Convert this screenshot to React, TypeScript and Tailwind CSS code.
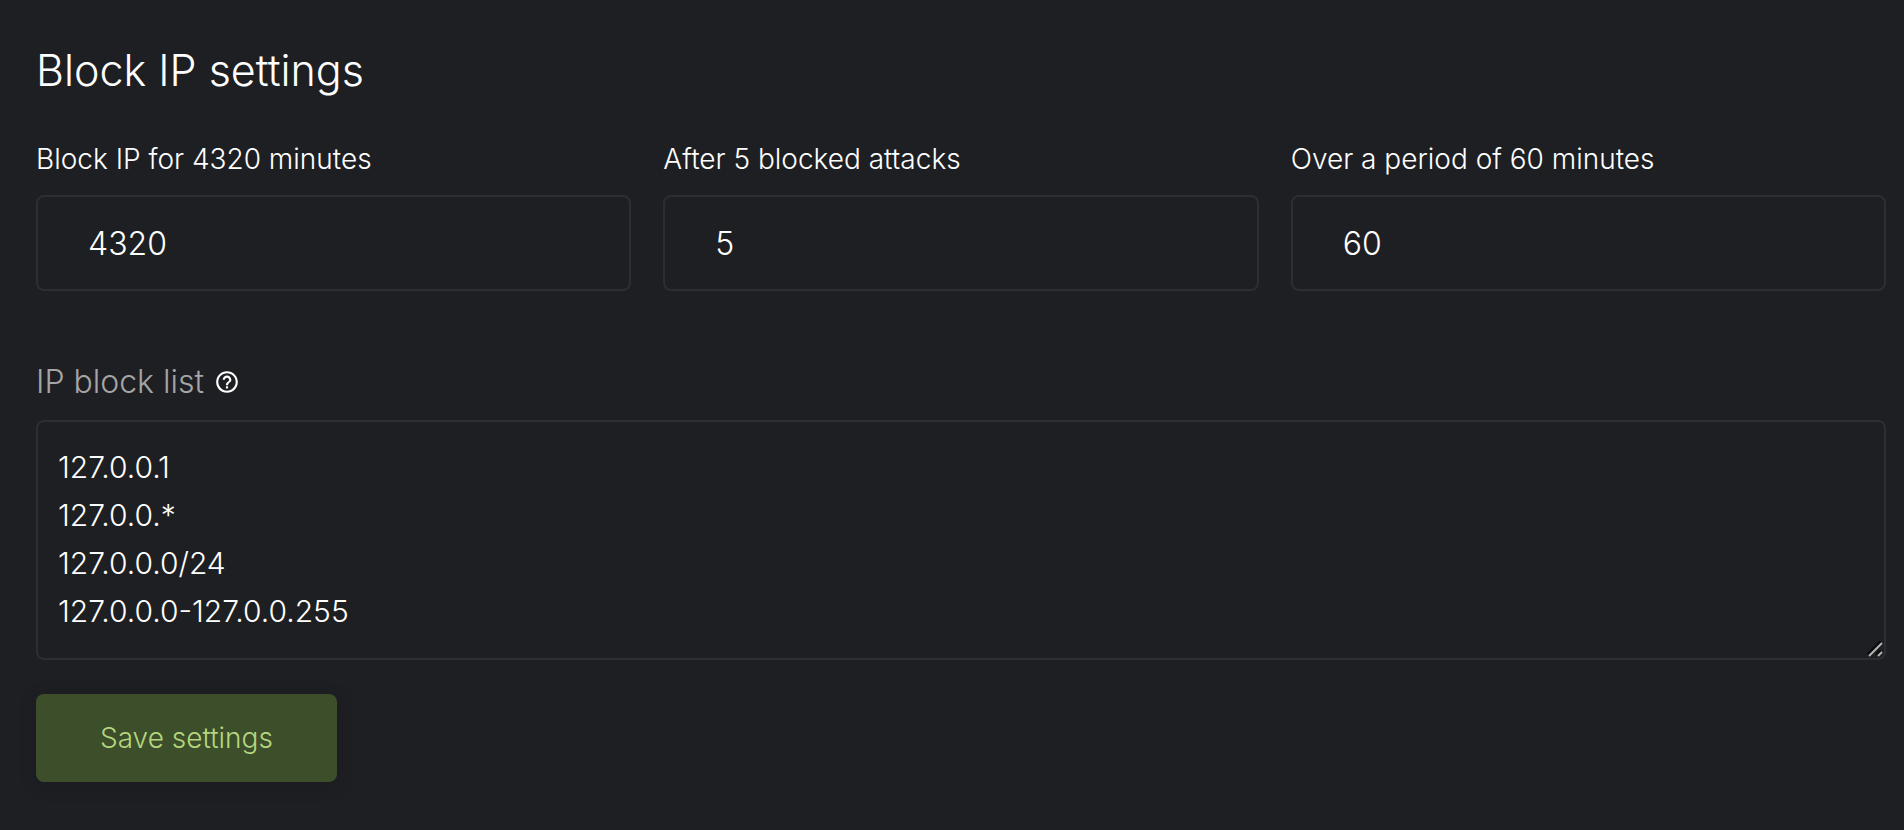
import { useState } from "react";

type NumberFieldProps = {
  id: string;
  label: string;
  value: string;
  onChange: (value: string) => void;
};

function NumberField({ id, label, value, onChange }: NumberFieldProps) {
  return (
    <div className="flex min-w-0 flex-col gap-5">
      <label htmlFor={id} className="text-[28px] leading-8 font-light whitespace-nowrap">
        {label}
      </label>
      <input
        id={id}
        type="text"
        inputMode="numeric"
        value={value}
        onChange={(event) => onChange(event.target.value)}
        className="h-24 w-full rounded-lg border-2 border-[#2d2d36] bg-transparent px-[50px] text-[32px] leading-9 font-light outline-none focus:border-[#4a4a56]"
      />
    </div>
  );
}

function HelpIcon() {
  return (
    <svg viewBox="0 0 24 24" className="size-[26px] fill-white" aria-hidden="true">
      <path d="M11 18h2v-2h-2v2zm1-16C6.480 2 2 6.480 2 12s4.480 10 10 10 10-4.480 10-10S17.520 2 12 2zm0 18c-4.410 0-8-3.590-8-8s3.590-8 8-8 8 3.590 8 8-3.590 8-8 8zm0-14c-2.210 0-4 1.790-4 4h2c0-1.100.9-2 2-2s2 .9 2 2c0 2-3 1.750-3 5h2c0-2.250 3-2.500 3-5 0-2.210-1.790-4-4-4z" />
    </svg>
  );
}

export default function App() {
  const [minutes, setMinutes] = useState("4320");
  const [attacks, setAttacks] = useState("5");
  const [period, setPeriod] = useState("60");
  const [blockList, setBlockList] = useState(
    "127.0.0.1\n127.0.0.*\n127.0.0.0/24\n127.0.0.0-127.0.0.255",
  );

  return (
    <main className="min-h-screen bg-[#1e1f23] pt-[46px] pr-[18px] pb-12 pl-9 font-['Inter',sans-serif] font-light text-white">
      <form onSubmit={(event) => event.preventDefault()}>
        <h1 className="text-[43px] leading-12 font-light">Block IP settings</h1>

        <div className="mt-[49px] grid grid-cols-3 gap-8">
          <NumberField
            id="block-minutes"
            label={`Block IP for ${minutes} minutes`}
            value={minutes}
            onChange={setMinutes}
          />
          <NumberField
            id="blocked-attacks"
            label={`After ${attacks} blocked attacks`}
            value={attacks}
            onChange={setAttacks}
          />
          <NumberField
            id="attack-period"
            label={`Over a period of ${period} minutes`}
            value={period}
            onChange={setPeriod}
          />
        </div>

        <div className="mt-[71px] flex items-center gap-[10px]">
          <label htmlFor="block-list" className="text-[32px] leading-10 text-[#a5a5a5]">
            IP block list
          </label>
          <button type="button" aria-label="About the IP block list">
            <HelpIcon />
          </button>
        </div>

        <div className="relative mt-[18px]">
          <textarea
            id="block-list"
            rows={4}
            value={blockList}
            onChange={(event) => setBlockList(event.target.value)}
            className="block w-full resize-none rounded-lg border-2 border-[#2d2d36] bg-transparent px-5 pt-[21px] pb-[23px] text-[30px] leading-12 font-light outline-none focus:border-[#4a4a56]"
          />
          <svg
            viewBox="0 0 16 16"
            className="pointer-events-none absolute right-[3px] bottom-[3px] size-4"
            fill="none"
            aria-hidden="true"
          >
            <path d="M1 14 14 1M10 14l4-4" stroke="#0c0c0e" strokeWidth="4" />
            <path d="M2 15 15 2M11 15l4-4" stroke="#b4b4b4" strokeWidth="2" />
          </svg>
        </div>

        <button
          type="submit"
          className="mt-[34px] h-22 rounded-lg bg-[#3c4e2a] px-16 text-[28px] leading-8 font-light text-[#b4d67e] shadow-[0_4px_16px_rgba(24,24,32,0.3)]"
        >
          Save settings
        </button>
      </form>
    </main>
  );
}
